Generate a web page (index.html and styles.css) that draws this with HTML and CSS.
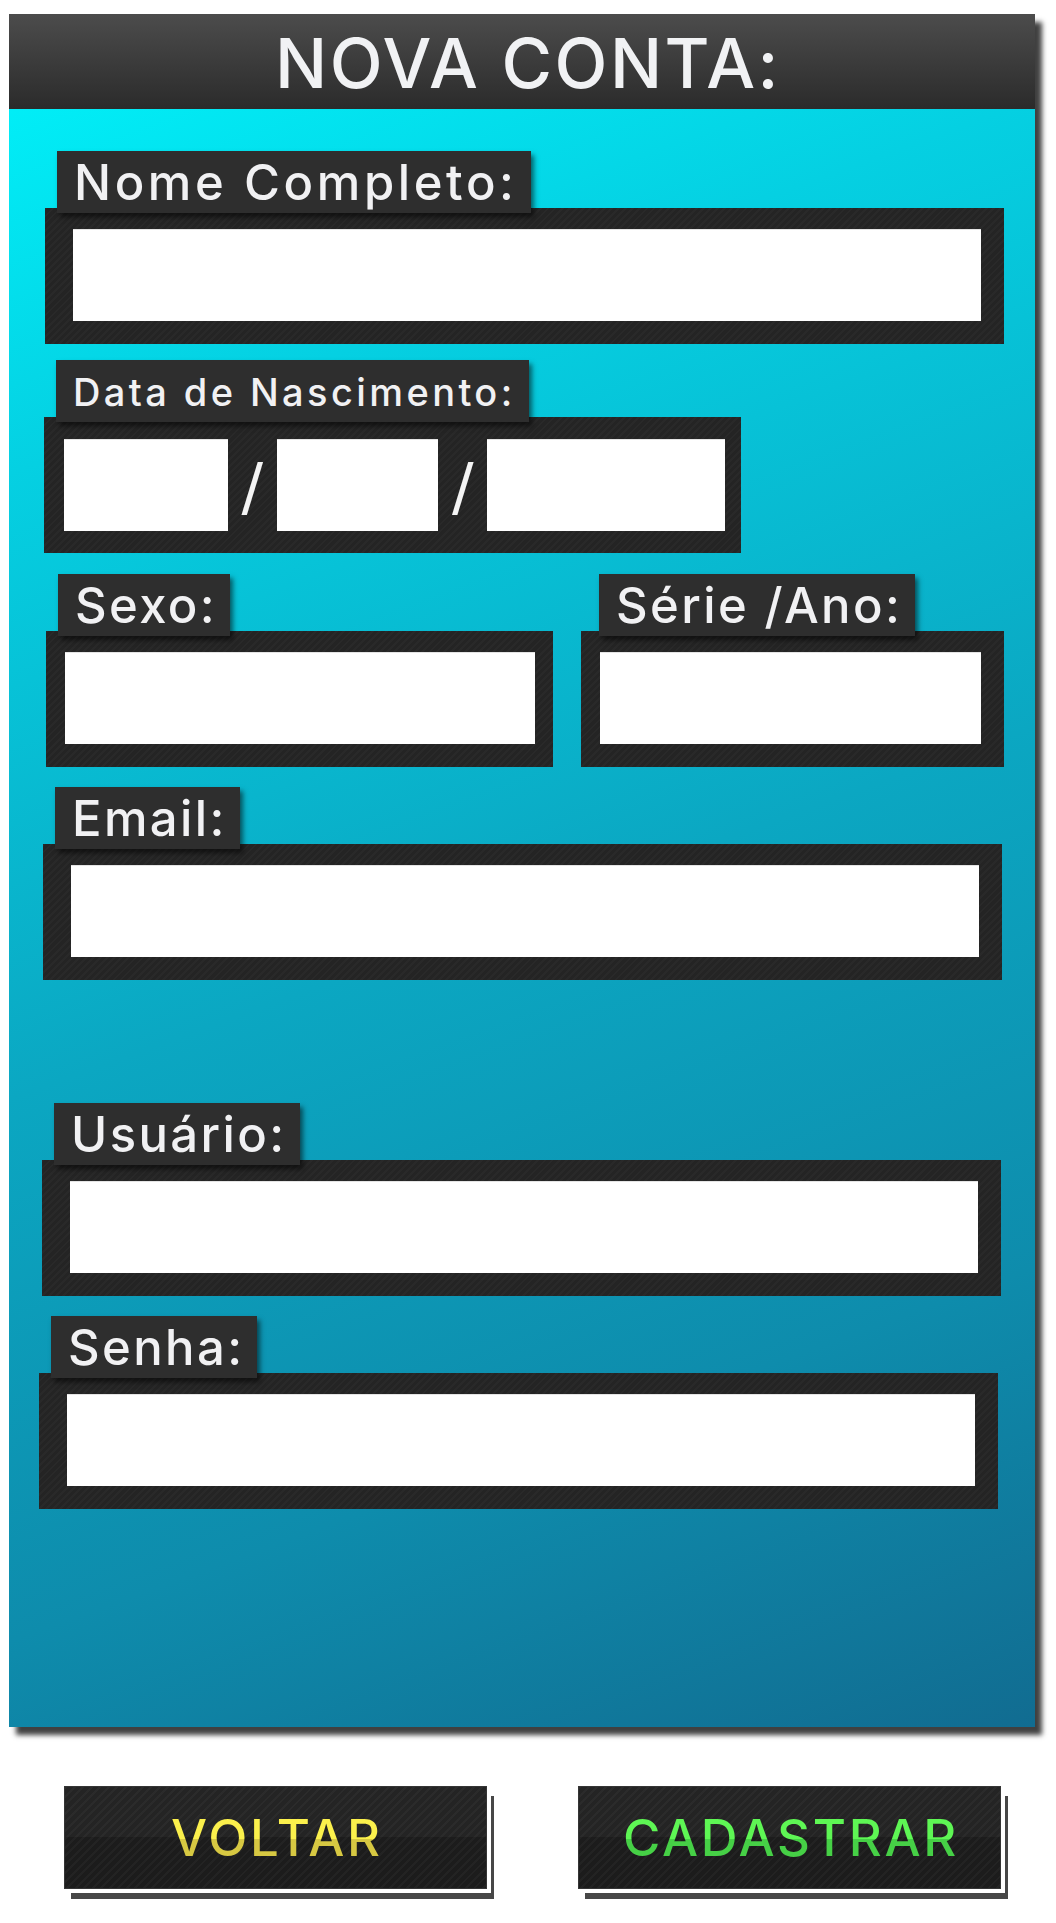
FILE: index.html
```html
<!DOCTYPE html>
<html lang="pt-BR">
<head>
<meta charset="utf-8">
<title>Nova Conta</title>
<link rel="stylesheet" href="styles.css">
</head>
<body>
<div class="panel">
  <div class="panel-head">NOVA CONTA:</div>
  <div class="panel-body">
    <div class="field f-nome">
      <div class="tag tag-wide">Nome Completo:</div>
      <div class="box"><div class="input"></div></div>
    </div>

    <div class="field f-data">
      <div class="tag tag-sm">Data de Nascimento:</div>
      <div class="box box-date">
        <div class="input in-day"></div>
        <span class="slash">/</span>
        <div class="input in-month"></div>
        <span class="slash">/</span>
        <div class="input in-year"></div>
      </div>
    </div>

    <div class="row">
      <div class="field f-sexo">
        <div class="tag">Sexo:</div>
        <div class="box box-half"><div class="input"></div></div>
      </div>
      <div class="field f-serie">
        <div class="tag tag-serie">Série /Ano:</div>
        <div class="box box-half2"><div class="input"></div></div>
      </div>
    </div>

    <div class="field f-email">
      <div class="tag">Email:</div>
      <div class="box"><div class="input"></div></div>
    </div>

    <div class="field f-user">
      <div class="tag">Usuário:</div>
      <div class="box"><div class="input"></div></div>
    </div>

    <div class="field f-senha">
      <div class="tag">Senha:</div>
      <div class="box"><div class="input"></div></div>
    </div>
  </div>
</div>

<div class="actions">
  <div class="btn"><span class="btn-text yellow">VOLTAR</span></div>
  <div class="btn"><span class="btn-text green">CADASTRAR</span></div>
</div>
</body>
</html>
```

FILE: styles.css
```css
html, body {
  margin: 0;
  padding: 0;
  background: #ffffff;
}

body {
  width: 1056px;
  height: 1923px;
  overflow: hidden;
  font-family: Inter, "Open Sans", "Liberation Sans", sans-serif;
}

.panel {
  margin: 14px 0 0 9px;
  width: 1026px;
  height: 1713px;
  display: flex;
  flex-direction: column;
  background: linear-gradient(160deg, #00f5fc 0%, #05d0e2 22%, #0ba7c2 52%, #0e8cac 78%, #116c91 100%);
  box-shadow: 7px 8px 5px rgba(0, 0, 0, 0.75);
}

.panel-head {
  height: 95px;
  flex: none;
  display: flex;
  align-items: center;
  justify-content: center;
  padding: 2px 0 0 12px;
  box-sizing: border-box;
  background: linear-gradient(#4c4c4c, #2b2b2b);
  color: #f1f2f4;
  font-size: 69px;
  font-weight: 500;
  letter-spacing: 2.5px;
}

.panel-body {
  display: flex;
  flex-direction: column;
  padding-top: 42px;
}

.field {
  display: flex;
  flex-direction: column;
  align-items: flex-start;
  width: 959px;
}

.f-nome { margin-left: 36px; }
.f-data { margin-left: 35px; margin-top: 16px; width: 697px; }
.row { display: flex; gap: 28px; margin-left: 37px; margin-top: 21px; }
.f-sexo { width: 507px; }
.f-serie { width: 423px; }
.f-email { margin-left: 34px; margin-top: 20px; }
.f-user { margin-left: 33px; margin-top: 123px; }
.f-senha { margin-left: 30px; margin-top: 20px; }

.tag {
  position: relative;
  z-index: 1;
  margin-left: 12px;
  margin-bottom: -5px;
  height: 62px;
  padding: 0 13px 0 17px;
  box-sizing: border-box;
  display: flex;
  align-items: center;
  background: #2e2e2e;
  color: #f1f1f3;
  font-size: 49px;
  font-weight: 500;
  letter-spacing: 2.4px;
  box-shadow: 3px 4px 5px rgba(0, 0, 0, 0.55);
  white-space: nowrap;
}

.tag-wide { letter-spacing: 3.6px; }

.tag-sm {
  font-size: 38px;
  letter-spacing: 3.4px;
  padding-top: 2px;
}

.tag-serie { margin-left: 18px; }

.box {
  align-self: stretch;
  height: 136px;
  box-sizing: border-box;
  padding: 21px 23px 23px 28px;
  background:
    repeating-linear-gradient(135deg, rgba(255,255,255,0.025) 0 2px, rgba(0,0,0,0) 2px 5px),
    #242424;
}

.input {
  height: 92px;
  background: #ffffff;
  border-top: 1px solid #e4e4e4;
  box-sizing: border-box;
}

.box-date {
  display: flex;
  align-items: flex-start;
  padding: 22px 16px 22px 20px;
}

.in-day { width: 164px; }
.in-month { width: 162px; }
.in-year { width: 238px; }

.slash {
  width: 49px;
  height: 92px;
  display: flex;
  align-items: center;
  justify-content: center;
  color: #f4f4f4;
  font-family: "DejaVu Sans", sans-serif;
  font-weight: 400;
  font-size: 64px;
  line-height: 1;
  padding-top: 4px;
  box-sizing: border-box;
}

.box-half { padding: 21px 18px 23px 19px; }
.box-half2 { padding: 21px 23px 23px 19px; }

.actions {
  display: flex;
  gap: 91px;
  margin: 59px 0 0 64px;
}

.btn {
  width: 423px;
  height: 103px;
  box-sizing: border-box;
  border: 1px solid #353535;
  background:
    repeating-linear-gradient(135deg, rgba(255,255,255,0.03) 0 2px, rgba(0,0,0,0) 2px 6px),
    linear-gradient(#242424 0 50%, #1c1c1c 50% 100%);
  box-shadow: 4px 4px 0 #ffffff, 7px 10px 0 #474747;
  display: flex;
}

.btn-text {
  flex: 1;
  display: flex;
  align-items: center;
  justify-content: center;
  font-size: 51px;
  font-weight: 500;
  letter-spacing: 2.7px;
  -webkit-background-clip: text;
  background-clip: text;
  color: transparent;
  padding: 0 0 0 3px;
}

.yellow {
  background-image: linear-gradient(#fbf04c 0 51%, #d7c842 51% 100%);
}

.green {
  background-image: linear-gradient(#5ef654 0 51%, #46d046 51% 100%);
}
```
